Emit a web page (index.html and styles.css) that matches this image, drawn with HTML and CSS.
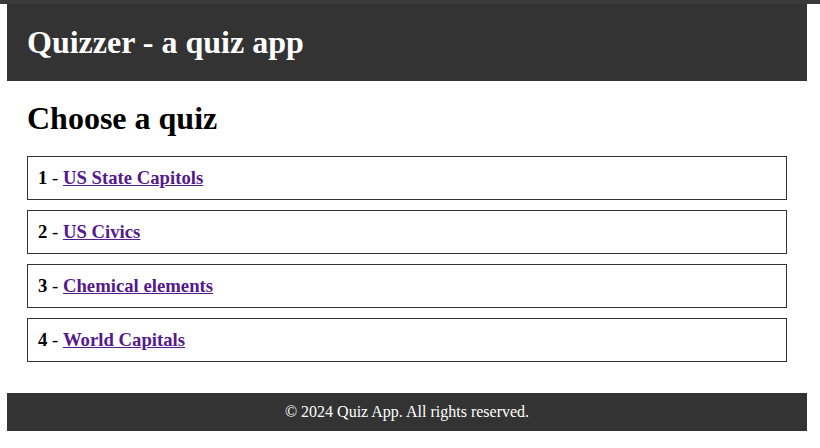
FILE: index.html
```html
<!DOCTYPE html>
<html lang="en">
<head>
<meta charset="utf-8">
<title>Quizzer</title>
<link rel="stylesheet" href="styles.css">
</head>
<body>
<div class="topstrip"></div>
<div class="page">
  <header class="site-header">
    <h1 class="site-title">Quizzer - a quiz app</h1>
  </header>
  <main class="content">
    <h2 class="section-title">Choose a quiz</h2>
    <ul class="quiz-list">
      <li class="quiz-item"><strong>1</strong> - <a class="quiz-link" href="#">US State Capitols</a></li>
      <li class="quiz-item"><strong>2</strong> - <a class="quiz-link" href="#">US Civics</a></li>
      <li class="quiz-item"><strong>3</strong> - <a class="quiz-link" href="#">Chemical elements</a></li>
      <li class="quiz-item"><strong>4</strong> - <a class="quiz-link" href="#">World Capitals</a></li>
    </ul>
  </main>
  <footer class="site-footer">&copy; 2024 Quiz App. All rights reserved.</footer>
</div>
</body>
</html>
```

FILE: styles.css
```css
html, body {
  margin: 0;
  padding: 0;
  background: #fff;
}
body {
  font-family: "Liberation Serif", "Times New Roman", serif;
  color: #000;
}
.topstrip {
  height: 4px;
  background: #3a3a3a;
}
.page {
  width: 800px;
  margin-left: 7px;
}
.site-header {
  background: #333;
  color: #fff;
  padding: 20px;
}
.site-title {
  margin: 0;
  font-size: 32px;
  line-height: 37px;
  font-weight: bold;
}
.content {
  padding: 20px 20px 31px;
}
.section-title {
  margin: 0 0 20px;
  font-size: 32px;
  line-height: 35px;
}
.quiz-list {
  list-style: none;
  margin: 0;
  padding: 0;
  display: flex;
  flex-direction: column;
  gap: 10px;
}
.quiz-item {
  border: 1px solid #333;
  padding: 0 10px;
  height: 42px;
  display: flex;
  align-items: center;
  font-size: 18.72px;
  white-space: pre;
}
.quiz-link {
  color: #551a8b;
  font-weight: bold;
}
.site-footer {
  background: #333;
  color: #fff;
  text-align: center;
  font-size: 16px;
  height: 38px;
  line-height: 38px;
}
```
